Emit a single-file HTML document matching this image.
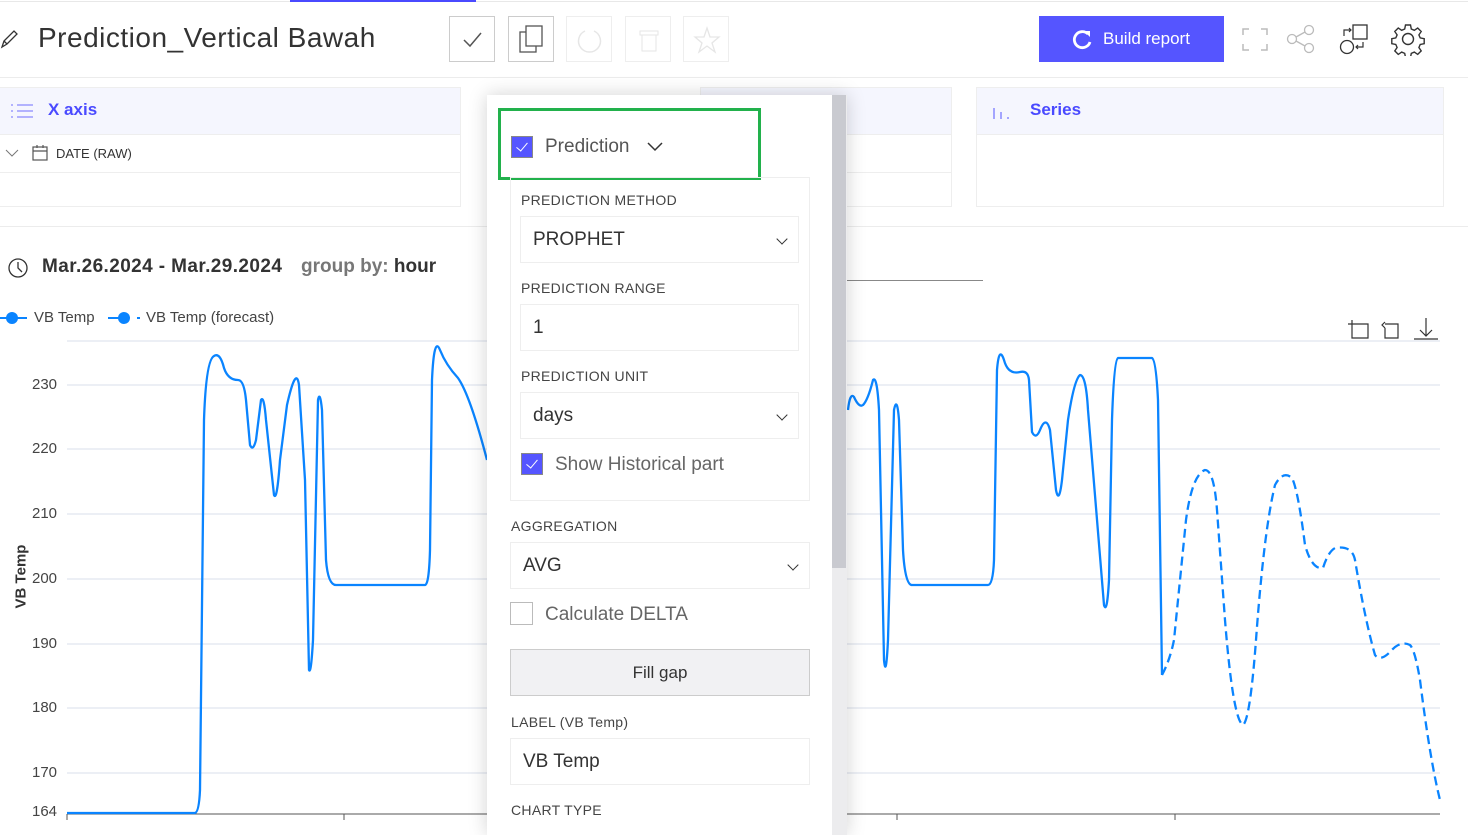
<!DOCTYPE html>
<html><head><meta charset="utf-8">
<style>
*{box-sizing:border-box;margin:0;padding:0}
body{width:1468px;height:824px;overflow:hidden;background:#fff;font-family:"Liberation Sans",sans-serif;color:#333;position:relative}
.abs{position:absolute}
.btn{position:absolute;top:16px;width:46px;height:46px;border:1px solid #ccc;background:#fff}
.card{position:absolute;top:87px;height:120px;border:1px solid #eee;background:#fff}
.card .hd{height:47px;background:#f5f6fe;border-bottom:1px solid #eee}
.lbl{position:absolute;font-size:14px;color:#444;letter-spacing:.3px}
.inp{position:absolute;border:1px solid #eee;background:#fff;font-size:19px;color:#333;padding-left:12px;display:flex;align-items:center}
.chev{position:absolute;right:12px;top:18px;width:8px;height:8px;border-right:1.3px solid #333;border-bottom:1.3px solid #333;transform:rotate(45deg)}
.cb{position:absolute;width:22px;height:22px;background:#5555ff;border:1px solid #888}
.cb:after{content:"";position:absolute;left:7px;top:3px;width:5px;height:10px;border-right:1.5px solid #fff;border-bottom:1.5px solid #fff;transform:rotate(40deg)}
.yl{position:absolute;left:32px;font-size:15px;color:#444}
</style></head><body>
<div class="abs" style="left:0;top:1px;width:1468px;height:1px;background:#e8e8e8"></div>
<div class="abs" style="left:290px;top:0;width:186px;height:2px;background:#4a4aff"></div>
<svg class="abs" style="left:0;top:28px" width="20" height="22" viewBox="0 0 20 22"><path d="M2 19 L4 13 L14 3 L17 6 L7 16 Z M4 13 L7 16" fill="none" stroke="#333" stroke-width="1.3"/></svg>
<div class="abs" style="left:38px;top:22px;font-size:28px;color:#333;letter-spacing:0.5px">Prediction_Vertical Bawah</div>
<div class="btn" style="left:449px"><svg width="46" height="46"><path d="M14 23 L20 29 L31 16" fill="none" stroke="#555" stroke-width="1.5"/></svg></div>
<div class="btn" style="left:508px"><svg width="46" height="46"><rect x="11" y="15" width="16" height="20" fill="#fff" stroke="#555" stroke-width="1.3"/><rect x="17" y="9" width="16" height="20" fill="#fff" stroke="#555" stroke-width="1.3"/></svg></div>
<div class="btn" style="left:566px;border-color:#eee"><svg width="46" height="46"><path d="M18 14 A11 11 0 1 0 27 14" fill="none" stroke="#e6e6e6" stroke-width="1.5"/></svg></div>
<div class="btn" style="left:625px;border-color:#eee"><svg width="46" height="46"><rect x="14" y="14" width="18" height="4" fill="none" stroke="#e6e6e6"/><rect x="16" y="18" width="14" height="16" fill="none" stroke="#e6e6e6"/></svg></div>
<div class="btn" style="left:683px;border-color:#eee"><svg width="46" height="46"><path d="M23 11 L26 20 L35 20 L28 26 L31 35 L23 29 L15 35 L18 26 L11 20 L20 20 Z" fill="none" stroke="#e6e6e6" stroke-width="1.3"/></svg></div>
<div class="abs" style="left:1039px;top:16px;width:185px;height:46px;background:#5555ff;color:#fff;font-size:17px;display:flex;align-items:center;padding-left:64px">Build report</div>
<svg class="abs" style="left:1070px;top:28px" width="24" height="24"><path d="M18 6 A8 8 0 1 0 20 14" fill="none" stroke="#fff" stroke-width="2.8"/><path d="M14 3 L20 3 L20 9 Z" fill="#fff"/></svg>
<svg class="abs" style="left:1240px;top:26px" width="30" height="26"><path d="M3 9V3H9M21 3H27V9M27 18V24H21M9 24H3V18" fill="none" stroke="#bbb" stroke-width="1.5"/></svg>
<svg class="abs" style="left:1285px;top:24px" width="32" height="30"><circle cx="24" cy="6" r="4.5" fill="none" stroke="#bbb" stroke-width="1.3"/><circle cx="7" cy="15" r="4.5" fill="none" stroke="#bbb" stroke-width="1.3"/><circle cx="24" cy="24" r="4.5" fill="none" stroke="#bbb" stroke-width="1.3"/><path d="M11 13L20 8M11 17L20 22" stroke="#bbb" stroke-width="1.3"/></svg>
<svg class="abs" style="left:1336px;top:22px" width="36" height="34"><rect x="17" y="3" width="14" height="14" fill="none" stroke="#333" stroke-width="1.3"/><circle cx="11" cy="25" r="6.5" fill="none" stroke="#333" stroke-width="1.3"/><path d="M8 14V8H15M13 6L15 8L13 10M27 20V25H20M22 23L20 25L22 27" fill="none" stroke="#333" stroke-width="1.2"/></svg>
<svg class="abs" style="left:1391px;top:22px" width="34" height="34" viewBox="0 0 34 34"><path d="M14.5 3h5l.8 4 3 1.3 3.4-2.3 3.5 3.5-2.3 3.4 1.3 3 4 .8v5l-4 .8-1.3 3 2.3 3.4-3.5 3.5-3.4-2.3-3 1.3-.8 4h-5l-.8-4-3-1.3-3.4 2.3-3.5-3.5 2.3-3.4-1.3-3-4-.8v-5l4-.8 1.3-3-2.3-3.4 3.5-3.5 3.4 2.3 3-1.3z" fill="none" stroke="#333" stroke-width="1.4"/><circle cx="17" cy="17" r="5.5" fill="none" stroke="#333" stroke-width="1.4"/></svg>
<div class="abs" style="left:0;top:77px;width:1468px;height:1px;background:#ececec"></div>

<div class="card" style="left:-1px;width:462px"><div class="hd"></div><div style="height:38px;border-bottom:1px solid #eee"></div></div>
<svg class="abs" style="left:10px;top:102px" width="24" height="18"><g stroke="#8a8aff" stroke-width="1.3"><path d="M7 3H23M7 9H23M7 15H23"/><path d="M1 3H3M1 9H3M1 15H3"/></g></svg>
<div class="abs" style="left:48px;top:100px;font-size:17px;font-weight:bold;color:#4a4aff">X axis</div>
<svg class="abs" style="left:5px;top:148px" width="14" height="10"><path d="M1 2L7 8L13 2" fill="none" stroke="#777" stroke-width="1"/></svg>
<svg class="abs" style="left:31px;top:144px" width="18" height="18"><rect x="2" y="3" width="14" height="13" fill="none" stroke="#555" stroke-width="1.2"/><path d="M2 7H16M6 1V4M12 1V4" stroke="#555" stroke-width="1.2"/></svg>
<div class="abs" style="left:56px;top:146px;font-size:13px;color:#333">DATE (RAW)</div>
<div class="card" style="left:700px;width:252px"><div class="hd"></div><div style="height:38px;border-bottom:1px solid #eee"></div></div>
<div class="card" style="left:976px;width:468px"><div class="hd"></div></div>
<svg class="abs" style="left:990px;top:102px" width="24" height="18"><path d="M4 6V17M11 10V17M18 15V17" stroke="#8a8aff" stroke-width="1.5"/></svg>
<div class="abs" style="left:1030px;top:100px;font-size:17px;font-weight:bold;color:#4a4aff">Series</div>
<div class="abs" style="left:0;top:226px;width:1468px;height:1px;background:#ececec"></div>

<svg class="abs" style="left:7px;top:257px" width="22" height="22"><circle cx="11" cy="11" r="9" fill="none" stroke="#333" stroke-width="1.3"/><path d="M11 5V11L15 15" fill="none" stroke="#333" stroke-width="1.3"/></svg>
<div class="abs" style="left:42px;top:256px;font-size:19px;font-weight:bold;color:#333;letter-spacing:0.4px">Mar.26.2024 - Mar.29.2024</div>
<div class="abs" style="left:301px;top:256px;font-size:19px;font-weight:bold;color:#777">group by: <span style="color:#333">hour</span></div>
<div class="abs" style="left:847px;top:280px;width:136px;height:1px;background:#888"></div>
<svg class="abs" style="left:0;top:308px" width="300" height="20"><path d="M0 10H27" stroke="#0a84ff" stroke-width="2"/><circle cx="12" cy="10" r="6" fill="#0a84ff"/><path d="M108 10H128" stroke="#0a84ff" stroke-width="2"/><circle cx="124" cy="10" r="6" fill="#0a84ff"/><path d="M137 10H140" stroke="#0a84ff" stroke-width="2"/></svg>
<div class="abs" style="left:34px;top:309px;font-size:15px;color:#444">VB Temp</div>
<div class="abs" style="left:146px;top:309px;font-size:15px;color:#444">VB Temp (forecast)</div>
<svg class="abs" style="left:1344px;top:316px" width="96" height="26"><g fill="none" stroke="#333" stroke-width="1.2"><path d="M8 4V22H24V8H4"/><path d="M41 8H54V22H41V12M41 6L38 9L41 12"/><path d="M82 2V20M76 14L82 20L88 14M70 23H94"/></g></svg>

<div class="yl" style="top:376px">230</div><div class="yl" style="top:440px">220</div><div class="yl" style="top:505px">210</div><div class="yl" style="top:570px">200</div><div class="yl" style="top:635px">190</div><div class="yl" style="top:699px">180</div><div class="yl" style="top:764px">170</div><div class="yl" style="top:803px">164</div>
<div class="abs" style="left:-24px;top:568px;transform:rotate(-90deg);font-size:15px;font-weight:bold;color:#333;width:90px;text-align:center">VB Temp</div>

<svg class="abs" style="left:0;top:0" width="1468" height="824">
<g stroke="#e6eaf2" stroke-width="1.5"><path d="M67 341H1440M67 385H1440M67 449H1440M67 514H1440M67 579H1440M67 644H1440M67 708H1440M67 773H1440"/></g>
<path d="M67 814H1440M67 814V820M344 814V820M897 814V820M1175 814V820" stroke="#555" stroke-width="1"/>
<g fill="none" stroke="#0a84ff" stroke-width="2.3" stroke-linejoin="round">
<path d="M67 813L195 813Q199 812 200 790L204 420Q206 360 214 356Q220 352 224 368Q228 380 238 380Q244 380 246 400L250 445Q253 452 256 440L261 400Q264 395 266 420L274 495Q277 502 280 460L287 405Q296 365 299 385L305 480L309 670Q311 675 313 640L318 400Q320 390 322 410L326 560Q328 585 336 585L425 585Q429 585 430 550L432 380Q434 335 440 350Q446 365 458 378Q470 395 487 460"/>
<path d="M848 410Q850 392 854 397Q859 408 863 405Q868 400 873 380Q877 375 879 410L884 660Q886 680 888 640L894 410Q897 395 899 420L903 550Q905 585 912 585L988 585Q993 585 994 560L997 370Q999 345 1004 360Q1008 375 1020 372Q1028 370 1029 380L1032 432Q1036 440 1040 430Q1046 415 1050 430L1056 490Q1059 505 1062 480L1068 420Q1074 380 1080 375Q1086 375 1088 410L1104 605Q1107 615 1109 580L1112 420Q1114 360 1118 358L1152 358Q1156 360 1158 400L1162 675"/>
<path d="M1162 675Q1170 660 1174 640Q1178 600 1186 520Q1192 475 1205 470Q1214 470 1217 510L1225 620Q1233 720 1243 725Q1250 720 1256 640Q1264 530 1275 485Q1283 470 1292 478Q1298 490 1305 545Q1312 570 1323 568Q1328 552 1335 548Q1352 545 1355 560Q1365 620 1375 655Q1380 662 1390 652Q1400 640 1410 645Q1415 650 1420 680Q1430 760 1440 800" stroke-dasharray="9 5"/>
</g>
</svg>

<div class="abs" style="left:487px;top:95px;width:360px;height:740px;background:#fff;box-shadow:0 0 18px rgba(0,0,0,.18)"></div>
<div class="abs" style="left:832px;top:95px;width:15px;height:740px;background:#ececee"></div>
<div class="abs" style="left:832px;top:95px;width:14px;height:473px;background:#c9cad0"></div>
<div class="abs" style="left:498px;top:108px;width:263px;height:72px;border:3px solid #22b14c"></div>
<div class="cb" style="left:511px;top:136px"></div>
<div class="abs" style="left:545px;top:136px;font-size:19px;color:#555">Prediction</div>
<svg class="abs" style="left:646px;top:140px" width="18" height="14"><path d="M2 3L9 10L16 3" fill="none" stroke="#333" stroke-width="1.5"/></svg>
<div class="abs" style="left:510px;top:177px;width:300px;height:324px;border:1px solid #eee"></div>
<div class="lbl" style="left:521px;top:192px">PREDICTION METHOD</div>
<div class="inp" style="left:520px;top:216px;width:279px;height:47px">PROPHET<div class="chev"></div></div>
<div class="lbl" style="left:521px;top:280px">PREDICTION RANGE</div>
<div class="inp" style="left:520px;top:304px;width:279px;height:47px">1</div>
<div class="lbl" style="left:521px;top:368px">PREDICTION UNIT</div>
<div class="inp" style="left:520px;top:392px;width:279px;height:47px">days<div class="chev"></div></div>
<div class="cb" style="left:521px;top:453px"></div>
<div class="abs" style="left:555px;top:454px;font-size:19px;color:#666">Show Historical part</div>
<div class="lbl" style="left:511px;top:518px">AGGREGATION</div>
<div class="inp" style="left:510px;top:542px;width:300px;height:47px">AVG<div class="chev"></div></div>
<div class="abs" style="left:510px;top:602px;width:23px;height:23px;border:1px solid #bbb;background:#fff"></div>
<div class="abs" style="left:545px;top:604px;font-size:19px;color:#666">Calculate DELTA</div>
<div class="abs" style="left:510px;top:649px;width:300px;height:47px;background:#f1f1f3;border:1px solid #ccc;display:flex;align-items:center;justify-content:center;font-size:17px;color:#333">Fill gap</div>
<div class="lbl" style="left:511px;top:714px">LABEL (VB Temp)</div>
<div class="inp" style="left:510px;top:738px;width:300px;height:47px">VB Temp</div>
<div class="lbl" style="left:511px;top:802px">CHART TYPE</div>
</body></html>
